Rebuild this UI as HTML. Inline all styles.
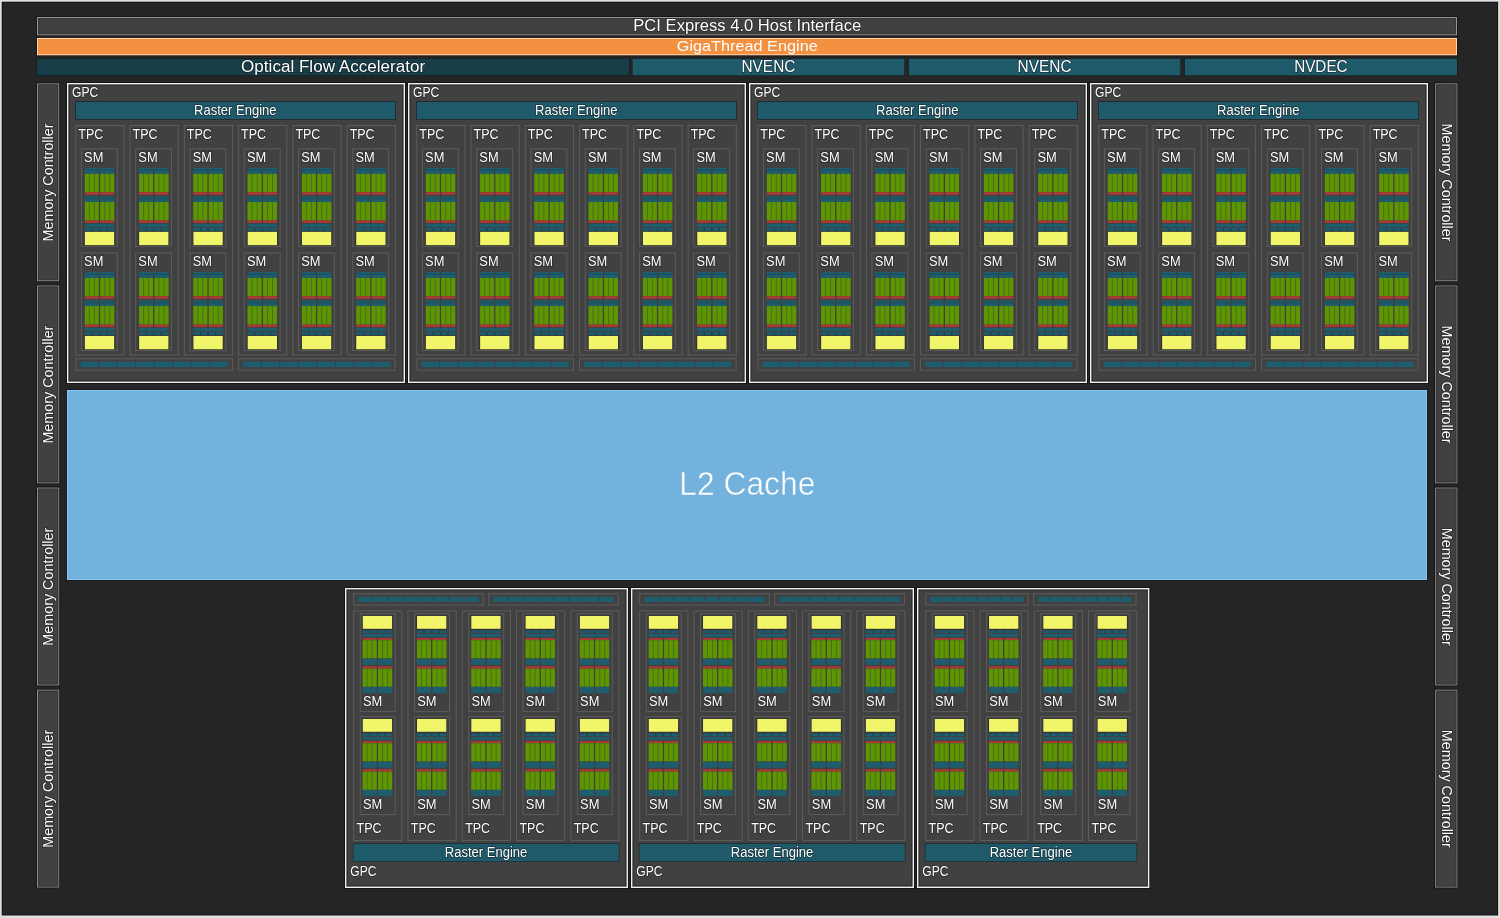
<!DOCTYPE html>
<html><head><meta charset="utf-8"><title>GPU Block Diagram</title>
<style>
html,body{margin:0;padding:0;background:#252525;width:1500px;height:918px;overflow:hidden}
svg{display:block;will-change:transform}
text{font-family:"Liberation Sans",sans-serif;fill:#ffffff;stroke:rgba(12,12,12,0.5);stroke-width:1.4px;paint-order:stroke}
</style></head><body>
<svg width="1500" height="918" viewBox="0 0 1500 918">
<defs><g id="smt"><rect x="0" y="19.6" width="13.95" height="6" fill="#1e5d6e"/><rect x="15.4" y="19.6" width="13.95" height="6" fill="#1e5d6e"/><rect x="0" y="21.3" width="13.95" height="0.7" fill="#1b4752"/><rect x="15.4" y="21.3" width="13.95" height="0.7" fill="#1b4752"/><rect x="0" y="25.6" width="13.95" height="18.2" fill="#4d6e1c"/><rect x="0" y="25.6" width="3.98" height="18.2" fill="#5d9600"/><rect x="4.98" y="25.6" width="3.98" height="18.2" fill="#5d9600"/><rect x="9.97" y="25.6" width="3.98" height="18.2" fill="#5d9600"/><rect x="15.4" y="25.6" width="13.95" height="18.2" fill="#4d6e1c"/><rect x="15.4" y="25.6" width="3.98" height="18.2" fill="#5d9600"/><rect x="20.38" y="25.6" width="3.98" height="18.2" fill="#5d9600"/><rect x="25.37" y="25.6" width="3.98" height="18.2" fill="#5d9600"/><rect x="0" y="43.8" width="13.95" height="2.7" fill="#a83a36"/><rect x="15.4" y="43.8" width="13.95" height="2.7" fill="#a83a36"/><rect x="0" y="48" width="13.95" height="5.7" fill="#1e5d6e"/><rect x="15.4" y="48" width="13.95" height="5.7" fill="#1e5d6e"/><rect x="0" y="50.1" width="13.95" height="0.7" fill="#1b4752"/><rect x="15.4" y="50.1" width="13.95" height="0.7" fill="#1b4752"/><rect x="0" y="53.7" width="13.95" height="18.4" fill="#4d6e1c"/><rect x="0" y="53.7" width="3.98" height="18.4" fill="#5d9600"/><rect x="4.98" y="53.7" width="3.98" height="18.4" fill="#5d9600"/><rect x="9.97" y="53.7" width="3.98" height="18.4" fill="#5d9600"/><rect x="15.4" y="53.7" width="13.95" height="18.4" fill="#4d6e1c"/><rect x="15.4" y="53.7" width="3.98" height="18.4" fill="#5d9600"/><rect x="20.38" y="53.7" width="3.98" height="18.4" fill="#5d9600"/><rect x="25.37" y="53.7" width="3.98" height="18.4" fill="#5d9600"/><rect x="0" y="72.1" width="13.95" height="2.6" fill="#a83a36"/><rect x="15.4" y="72.1" width="13.95" height="2.6" fill="#a83a36"/><rect x="0" y="75.6" width="29.35" height="3.1" fill="#1e5d6e"/><rect x="0" y="79.6" width="29.35" height="2.9" fill="#1a3d48"/><rect x="0" y="79.6" width="6.59" height="2.9" fill="#1e5d6e"/><rect x="7.59" y="79.6" width="6.59" height="2.9" fill="#1e5d6e"/><rect x="15.18" y="79.6" width="6.59" height="2.9" fill="#1e5d6e"/><rect x="22.76" y="79.6" width="6.59" height="2.9" fill="#1e5d6e"/><rect x="-0.5" y="83" width="30.35" height="14.4" fill="#1c1c28"/><rect x="0" y="83.5" width="29.35" height="13.4" fill="#f0f56a"/></g><g id="smb"><rect x="-0.5" y="2.2" width="30.35" height="13.9" fill="#1c1c28"/><rect x="0" y="2.7" width="29.35" height="12.9" fill="#f0f56a"/><rect x="0" y="17.3" width="29.35" height="2.5" fill="#1a3d48"/><rect x="0" y="17.3" width="6.59" height="2.5" fill="#1e5d6e"/><rect x="7.59" y="17.3" width="6.59" height="2.5" fill="#1e5d6e"/><rect x="15.18" y="17.3" width="6.59" height="2.5" fill="#1e5d6e"/><rect x="22.76" y="17.3" width="6.59" height="2.5" fill="#1e5d6e"/><rect x="0" y="20.8" width="29.35" height="3.0" fill="#1e5d6e"/><rect x="0" y="24.8" width="13.95" height="2.3" fill="#a83a36"/><rect x="15.4" y="24.8" width="13.95" height="2.3" fill="#a83a36"/><rect x="0" y="27.1" width="13.95" height="17.9" fill="#4d6e1c"/><rect x="0" y="27.1" width="3.98" height="17.9" fill="#5d9600"/><rect x="4.98" y="27.1" width="3.98" height="17.9" fill="#5d9600"/><rect x="9.97" y="27.1" width="3.98" height="17.9" fill="#5d9600"/><rect x="15.4" y="27.1" width="13.95" height="17.9" fill="#4d6e1c"/><rect x="15.4" y="27.1" width="3.98" height="17.9" fill="#5d9600"/><rect x="20.38" y="27.1" width="3.98" height="17.9" fill="#5d9600"/><rect x="25.37" y="27.1" width="3.98" height="17.9" fill="#5d9600"/><rect x="0" y="45.8" width="13.95" height="5.8" fill="#1e5d6e"/><rect x="15.4" y="45.8" width="13.95" height="5.8" fill="#1e5d6e"/><rect x="0" y="53" width="13.95" height="2.6" fill="#a83a36"/><rect x="15.4" y="53" width="13.95" height="2.6" fill="#a83a36"/><rect x="0" y="55.6" width="13.95" height="18" fill="#4d6e1c"/><rect x="0" y="55.6" width="3.98" height="18" fill="#5d9600"/><rect x="4.98" y="55.6" width="3.98" height="18" fill="#5d9600"/><rect x="9.97" y="55.6" width="3.98" height="18" fill="#5d9600"/><rect x="15.4" y="55.6" width="13.95" height="18" fill="#4d6e1c"/><rect x="15.4" y="55.6" width="3.98" height="18" fill="#5d9600"/><rect x="20.38" y="55.6" width="3.98" height="18" fill="#5d9600"/><rect x="25.37" y="55.6" width="3.98" height="18" fill="#5d9600"/><rect x="0" y="73.6" width="13.95" height="6.2" fill="#1e5d6e"/><rect x="15.4" y="73.6" width="13.95" height="6.2" fill="#1e5d6e"/></g></defs>
<rect x="0" y="0" width="1500" height="918" fill="#dfe1e3"/>
<rect x="1.7" y="1.7" width="1496.4" height="913.8" fill="#121212"/>
<rect x="2.7" y="2.7" width="1494.5" height="911.9" fill="#252525"/>
<rect x="36.5" y="16.5" width="1421" height="19.3" fill="none" stroke="#161616" stroke-width="1"/>
<rect x="37.55" y="17.55" width="1418.9" height="17.2" fill="#414141" stroke="#969696" stroke-width="1.1"/>
<rect x="38.6" y="18.6" width="1416.8" height="15.1" fill="none" stroke="#363636" stroke-width="1"/>
<text x="747.25" y="30.8" font-size="16.5" text-anchor="middle" textLength="228" lengthAdjust="spacingAndGlyphs">PCI Express 4.0 Host Interface</text>
<rect x="36.5" y="37.4" width="1421" height="18.4" fill="none" stroke="#161616" stroke-width="1"/>
<rect x="37" y="37.9" width="1420" height="17.4" fill="#ffd9b0"/>
<rect x="38" y="38.9" width="1418" height="15.4" fill="#f39140"/>
<text x="747.25" y="51.3" font-size="15" text-anchor="middle" textLength="141" lengthAdjust="spacingAndGlyphs" fill="#fff4ea" style="stroke:none">GigaThread Engine</text>
<rect x="36.4" y="58.3" width="593.4" height="17.6" fill="#141414"/>
<rect x="37" y="58.8" width="592.2" height="16.6" fill="#163d48"/>
<text x="333.1" y="72" font-size="16" text-anchor="middle" textLength="184" lengthAdjust="spacingAndGlyphs">Optical Flow Accelerator</text>
<rect x="631.9" y="58.3" width="273.1" height="17.6" fill="#141414"/>
<rect x="632.5" y="58.8" width="271.9" height="16.6" fill="#1f5a6a"/>
<text x="768.45" y="72" font-size="16" text-anchor="middle" textLength="54" lengthAdjust="spacingAndGlyphs">NVENC</text>
<rect x="908.1" y="58.3" width="273" height="17.6" fill="#141414"/>
<rect x="908.7" y="58.8" width="271.8" height="16.6" fill="#1f5a6a"/>
<text x="1044.6" y="72" font-size="16" text-anchor="middle" textLength="54" lengthAdjust="spacingAndGlyphs">NVENC</text>
<rect x="1184.2" y="58.3" width="273.4" height="17.6" fill="#141414"/>
<rect x="1184.8" y="58.8" width="272.2" height="16.6" fill="#1f5a6a"/>
<text x="1320.9" y="72" font-size="16" text-anchor="middle" textLength="53.5" lengthAdjust="spacingAndGlyphs">NVDEC</text>
<rect x="36.4" y="82.9" width="23.2" height="198.8" fill="none" stroke="#161616" stroke-width="1"/>
<rect x="37.5" y="83.9" width="21.2" height="196.8" fill="#414141" stroke="#8e8e8e" stroke-width="1"/>
<rect x="38.5" y="84.9" width="19.2" height="194.8" fill="none" stroke="#363636" stroke-width="1"/>
<text transform="translate(52.9 182.5) rotate(-90)" x="0" y="0" font-size="14.5" text-anchor="middle" textLength="118" lengthAdjust="spacingAndGlyphs">Memory Controller</text>
<rect x="1434.6" y="82.9" width="23.2" height="198.8" fill="none" stroke="#161616" stroke-width="1"/>
<rect x="1435.7" y="83.9" width="21.2" height="196.8" fill="#414141" stroke="#8e8e8e" stroke-width="1"/>
<rect x="1436.7" y="84.9" width="19.2" height="194.8" fill="none" stroke="#363636" stroke-width="1"/>
<text transform="translate(1442.1 182.5) rotate(90)" x="0" y="0" font-size="14.5" text-anchor="middle" textLength="118" lengthAdjust="spacingAndGlyphs">Memory Controller</text>
<rect x="36.4" y="285" width="23.2" height="198.8" fill="none" stroke="#161616" stroke-width="1"/>
<rect x="37.5" y="286" width="21.2" height="196.8" fill="#414141" stroke="#8e8e8e" stroke-width="1"/>
<rect x="38.5" y="287" width="19.2" height="194.8" fill="none" stroke="#363636" stroke-width="1"/>
<text transform="translate(52.9 384.6) rotate(-90)" x="0" y="0" font-size="14.5" text-anchor="middle" textLength="118" lengthAdjust="spacingAndGlyphs">Memory Controller</text>
<rect x="1434.6" y="285" width="23.2" height="198.8" fill="none" stroke="#161616" stroke-width="1"/>
<rect x="1435.7" y="286" width="21.2" height="196.8" fill="#414141" stroke="#8e8e8e" stroke-width="1"/>
<rect x="1436.7" y="287" width="19.2" height="194.8" fill="none" stroke="#363636" stroke-width="1"/>
<text transform="translate(1442.1 384.6) rotate(90)" x="0" y="0" font-size="14.5" text-anchor="middle" textLength="118" lengthAdjust="spacingAndGlyphs">Memory Controller</text>
<rect x="36.4" y="487.1" width="23.2" height="198.8" fill="none" stroke="#161616" stroke-width="1"/>
<rect x="37.5" y="488.1" width="21.2" height="196.8" fill="#414141" stroke="#8e8e8e" stroke-width="1"/>
<rect x="38.5" y="489.1" width="19.2" height="194.8" fill="none" stroke="#363636" stroke-width="1"/>
<text transform="translate(52.9 586.7) rotate(-90)" x="0" y="0" font-size="14.5" text-anchor="middle" textLength="118" lengthAdjust="spacingAndGlyphs">Memory Controller</text>
<rect x="1434.6" y="487.1" width="23.2" height="198.8" fill="none" stroke="#161616" stroke-width="1"/>
<rect x="1435.7" y="488.1" width="21.2" height="196.8" fill="#414141" stroke="#8e8e8e" stroke-width="1"/>
<rect x="1436.7" y="489.1" width="19.2" height="194.8" fill="none" stroke="#363636" stroke-width="1"/>
<text transform="translate(1442.1 586.7) rotate(90)" x="0" y="0" font-size="14.5" text-anchor="middle" textLength="118" lengthAdjust="spacingAndGlyphs">Memory Controller</text>
<rect x="36.4" y="689.2" width="23.2" height="198.8" fill="none" stroke="#161616" stroke-width="1"/>
<rect x="37.5" y="690.2" width="21.2" height="196.8" fill="#414141" stroke="#8e8e8e" stroke-width="1"/>
<rect x="38.5" y="691.2" width="19.2" height="194.8" fill="none" stroke="#363636" stroke-width="1"/>
<text transform="translate(52.9 788.8) rotate(-90)" x="0" y="0" font-size="14.5" text-anchor="middle" textLength="118" lengthAdjust="spacingAndGlyphs">Memory Controller</text>
<rect x="1434.6" y="689.2" width="23.2" height="198.8" fill="none" stroke="#161616" stroke-width="1"/>
<rect x="1435.7" y="690.2" width="21.2" height="196.8" fill="#414141" stroke="#8e8e8e" stroke-width="1"/>
<rect x="1436.7" y="691.2" width="19.2" height="194.8" fill="none" stroke="#363636" stroke-width="1"/>
<text transform="translate(1442.1 788.8) rotate(90)" x="0" y="0" font-size="14.5" text-anchor="middle" textLength="118" lengthAdjust="spacingAndGlyphs">Memory Controller</text>
<rect x="66.5" y="82.5" width="339" height="301" fill="none" stroke="#141414" stroke-width="1"/>
<rect x="67" y="83" width="338" height="300" fill="#f0f0f0"/>
<rect x="68.4" y="84.4" width="335.2" height="297.2" fill="#2a2a2a"/>
<rect x="69.6" y="85.6" width="332.8" height="294.8" fill="#414141"/>
<text x="72" y="97" font-size="14.5" textLength="26.3" lengthAdjust="spacingAndGlyphs">GPC</text>
<rect x="75.1" y="101.3" width="320.8" height="18.3" fill="#1c1c1c"/>
<rect x="75.7" y="101.9" width="319.6" height="17.2" fill="#1f5a6a"/>
<text x="235.25" y="114.8" font-size="14" text-anchor="middle" textLength="82.5" lengthAdjust="spacingAndGlyphs">Raster Engine</text>
<rect x="75.8" y="125.5" width="48.2" height="229.5" fill="#414141" stroke="#5c5c5c" stroke-width="1"/>
<text x="78.3" y="139" font-size="14.5" textLength="25" lengthAdjust="spacingAndGlyphs">TPC</text>
<rect x="81.4" y="148.8" width="35.9" height="97.5" fill="#414141" stroke="#5c5c5c" stroke-width="1"/>
<text x="84.1" y="162.3" font-size="14.5" textLength="19.3" lengthAdjust="spacingAndGlyphs">SM</text>
<use href="#smt" x="84.85" y="148.3"/>
<rect x="81.4" y="252.9" width="35.9" height="97.5" fill="#414141" stroke="#5c5c5c" stroke-width="1"/>
<text x="84.1" y="266.4" font-size="14.5" textLength="19.3" lengthAdjust="spacingAndGlyphs">SM</text>
<use href="#smt" x="84.85" y="252.4"/>
<rect x="130.07" y="125.5" width="48.2" height="229.5" fill="#414141" stroke="#5c5c5c" stroke-width="1"/>
<text x="132.57" y="139" font-size="14.5" textLength="25" lengthAdjust="spacingAndGlyphs">TPC</text>
<rect x="135.67" y="148.8" width="35.9" height="97.5" fill="#414141" stroke="#5c5c5c" stroke-width="1"/>
<text x="138.37" y="162.3" font-size="14.5" textLength="19.3" lengthAdjust="spacingAndGlyphs">SM</text>
<use href="#smt" x="139.12" y="148.3"/>
<rect x="135.67" y="252.9" width="35.9" height="97.5" fill="#414141" stroke="#5c5c5c" stroke-width="1"/>
<text x="138.37" y="266.4" font-size="14.5" textLength="19.3" lengthAdjust="spacingAndGlyphs">SM</text>
<use href="#smt" x="139.12" y="252.4"/>
<rect x="184.34" y="125.5" width="48.2" height="229.5" fill="#414141" stroke="#5c5c5c" stroke-width="1"/>
<text x="186.84" y="139" font-size="14.5" textLength="25" lengthAdjust="spacingAndGlyphs">TPC</text>
<rect x="189.94" y="148.8" width="35.9" height="97.5" fill="#414141" stroke="#5c5c5c" stroke-width="1"/>
<text x="192.64" y="162.3" font-size="14.5" textLength="19.3" lengthAdjust="spacingAndGlyphs">SM</text>
<use href="#smt" x="193.39" y="148.3"/>
<rect x="189.94" y="252.9" width="35.9" height="97.5" fill="#414141" stroke="#5c5c5c" stroke-width="1"/>
<text x="192.64" y="266.4" font-size="14.5" textLength="19.3" lengthAdjust="spacingAndGlyphs">SM</text>
<use href="#smt" x="193.39" y="252.4"/>
<rect x="238.61" y="125.5" width="48.2" height="229.5" fill="#414141" stroke="#5c5c5c" stroke-width="1"/>
<text x="241.11" y="139" font-size="14.5" textLength="25" lengthAdjust="spacingAndGlyphs">TPC</text>
<rect x="244.21" y="148.8" width="35.9" height="97.5" fill="#414141" stroke="#5c5c5c" stroke-width="1"/>
<text x="246.91" y="162.3" font-size="14.5" textLength="19.3" lengthAdjust="spacingAndGlyphs">SM</text>
<use href="#smt" x="247.66" y="148.3"/>
<rect x="244.21" y="252.9" width="35.9" height="97.5" fill="#414141" stroke="#5c5c5c" stroke-width="1"/>
<text x="246.91" y="266.4" font-size="14.5" textLength="19.3" lengthAdjust="spacingAndGlyphs">SM</text>
<use href="#smt" x="247.66" y="252.4"/>
<rect x="292.88" y="125.5" width="48.2" height="229.5" fill="#414141" stroke="#5c5c5c" stroke-width="1"/>
<text x="295.38" y="139" font-size="14.5" textLength="25" lengthAdjust="spacingAndGlyphs">TPC</text>
<rect x="298.48" y="148.8" width="35.9" height="97.5" fill="#414141" stroke="#5c5c5c" stroke-width="1"/>
<text x="301.18" y="162.3" font-size="14.5" textLength="19.3" lengthAdjust="spacingAndGlyphs">SM</text>
<use href="#smt" x="301.93" y="148.3"/>
<rect x="298.48" y="252.9" width="35.9" height="97.5" fill="#414141" stroke="#5c5c5c" stroke-width="1"/>
<text x="301.18" y="266.4" font-size="14.5" textLength="19.3" lengthAdjust="spacingAndGlyphs">SM</text>
<use href="#smt" x="301.93" y="252.4"/>
<rect x="347.15" y="125.5" width="48.2" height="229.5" fill="#414141" stroke="#5c5c5c" stroke-width="1"/>
<text x="349.65" y="139" font-size="14.5" textLength="25" lengthAdjust="spacingAndGlyphs">TPC</text>
<rect x="352.75" y="148.8" width="35.9" height="97.5" fill="#414141" stroke="#5c5c5c" stroke-width="1"/>
<text x="355.45" y="162.3" font-size="14.5" textLength="19.3" lengthAdjust="spacingAndGlyphs">SM</text>
<use href="#smt" x="356.2" y="148.3"/>
<rect x="352.75" y="252.9" width="35.9" height="97.5" fill="#414141" stroke="#5c5c5c" stroke-width="1"/>
<text x="355.45" y="266.4" font-size="14.5" textLength="19.3" lengthAdjust="spacingAndGlyphs">SM</text>
<use href="#smt" x="356.2" y="252.4"/>
<rect x="75.9" y="358.8" width="156.55" height="11.4" fill="#414141" stroke="#5c5c5c" stroke-width="1"/>
<rect x="80.5" y="361.7" width="147.35" height="5.4" fill="#374246"/>
<rect x="80.5" y="361.7" width="17.54" height="5.4" fill="#1e5d6e"/>
<rect x="99.04" y="361.7" width="17.54" height="5.4" fill="#1e5d6e"/>
<rect x="117.59" y="361.7" width="17.54" height="5.4" fill="#1e5d6e"/>
<rect x="136.13" y="361.7" width="17.54" height="5.4" fill="#1e5d6e"/>
<rect x="154.68" y="361.7" width="17.54" height="5.4" fill="#1e5d6e"/>
<rect x="173.22" y="361.7" width="17.54" height="5.4" fill="#1e5d6e"/>
<rect x="191.76" y="361.7" width="17.54" height="5.4" fill="#1e5d6e"/>
<rect x="210.31" y="361.7" width="17.54" height="5.4" fill="#1e5d6e"/>
<rect x="238.55" y="358.8" width="156.55" height="11.4" fill="#414141" stroke="#5c5c5c" stroke-width="1"/>
<rect x="243.15" y="361.7" width="147.35" height="5.4" fill="#374246"/>
<rect x="243.15" y="361.7" width="17.54" height="5.4" fill="#1e5d6e"/>
<rect x="261.69" y="361.7" width="17.54" height="5.4" fill="#1e5d6e"/>
<rect x="280.24" y="361.7" width="17.54" height="5.4" fill="#1e5d6e"/>
<rect x="298.78" y="361.7" width="17.54" height="5.4" fill="#1e5d6e"/>
<rect x="317.32" y="361.7" width="17.54" height="5.4" fill="#1e5d6e"/>
<rect x="335.87" y="361.7" width="17.54" height="5.4" fill="#1e5d6e"/>
<rect x="354.41" y="361.7" width="17.54" height="5.4" fill="#1e5d6e"/>
<rect x="372.96" y="361.7" width="17.54" height="5.4" fill="#1e5d6e"/>
<rect x="407.5" y="82.5" width="339" height="301" fill="none" stroke="#141414" stroke-width="1"/>
<rect x="408" y="83" width="338" height="300" fill="#f0f0f0"/>
<rect x="409.4" y="84.4" width="335.2" height="297.2" fill="#2a2a2a"/>
<rect x="410.6" y="85.6" width="332.8" height="294.8" fill="#414141"/>
<text x="413" y="97" font-size="14.5" textLength="26.3" lengthAdjust="spacingAndGlyphs">GPC</text>
<rect x="416.1" y="101.3" width="320.8" height="18.3" fill="#1c1c1c"/>
<rect x="416.7" y="101.9" width="319.6" height="17.2" fill="#1f5a6a"/>
<text x="576.25" y="114.8" font-size="14" text-anchor="middle" textLength="82.5" lengthAdjust="spacingAndGlyphs">Raster Engine</text>
<rect x="416.8" y="125.5" width="48.2" height="229.5" fill="#414141" stroke="#5c5c5c" stroke-width="1"/>
<text x="419.3" y="139" font-size="14.5" textLength="25" lengthAdjust="spacingAndGlyphs">TPC</text>
<rect x="422.4" y="148.8" width="35.9" height="97.5" fill="#414141" stroke="#5c5c5c" stroke-width="1"/>
<text x="425.1" y="162.3" font-size="14.5" textLength="19.3" lengthAdjust="spacingAndGlyphs">SM</text>
<use href="#smt" x="425.85" y="148.3"/>
<rect x="422.4" y="252.9" width="35.9" height="97.5" fill="#414141" stroke="#5c5c5c" stroke-width="1"/>
<text x="425.1" y="266.4" font-size="14.5" textLength="19.3" lengthAdjust="spacingAndGlyphs">SM</text>
<use href="#smt" x="425.85" y="252.4"/>
<rect x="471.07" y="125.5" width="48.2" height="229.5" fill="#414141" stroke="#5c5c5c" stroke-width="1"/>
<text x="473.57" y="139" font-size="14.5" textLength="25" lengthAdjust="spacingAndGlyphs">TPC</text>
<rect x="476.67" y="148.8" width="35.9" height="97.5" fill="#414141" stroke="#5c5c5c" stroke-width="1"/>
<text x="479.37" y="162.3" font-size="14.5" textLength="19.3" lengthAdjust="spacingAndGlyphs">SM</text>
<use href="#smt" x="480.12" y="148.3"/>
<rect x="476.67" y="252.9" width="35.9" height="97.5" fill="#414141" stroke="#5c5c5c" stroke-width="1"/>
<text x="479.37" y="266.4" font-size="14.5" textLength="19.3" lengthAdjust="spacingAndGlyphs">SM</text>
<use href="#smt" x="480.12" y="252.4"/>
<rect x="525.34" y="125.5" width="48.2" height="229.5" fill="#414141" stroke="#5c5c5c" stroke-width="1"/>
<text x="527.84" y="139" font-size="14.5" textLength="25" lengthAdjust="spacingAndGlyphs">TPC</text>
<rect x="530.94" y="148.8" width="35.9" height="97.5" fill="#414141" stroke="#5c5c5c" stroke-width="1"/>
<text x="533.64" y="162.3" font-size="14.5" textLength="19.3" lengthAdjust="spacingAndGlyphs">SM</text>
<use href="#smt" x="534.39" y="148.3"/>
<rect x="530.94" y="252.9" width="35.9" height="97.5" fill="#414141" stroke="#5c5c5c" stroke-width="1"/>
<text x="533.64" y="266.4" font-size="14.5" textLength="19.3" lengthAdjust="spacingAndGlyphs">SM</text>
<use href="#smt" x="534.39" y="252.4"/>
<rect x="579.61" y="125.5" width="48.2" height="229.5" fill="#414141" stroke="#5c5c5c" stroke-width="1"/>
<text x="582.11" y="139" font-size="14.5" textLength="25" lengthAdjust="spacingAndGlyphs">TPC</text>
<rect x="585.21" y="148.8" width="35.9" height="97.5" fill="#414141" stroke="#5c5c5c" stroke-width="1"/>
<text x="587.91" y="162.3" font-size="14.5" textLength="19.3" lengthAdjust="spacingAndGlyphs">SM</text>
<use href="#smt" x="588.66" y="148.3"/>
<rect x="585.21" y="252.9" width="35.9" height="97.5" fill="#414141" stroke="#5c5c5c" stroke-width="1"/>
<text x="587.91" y="266.4" font-size="14.5" textLength="19.3" lengthAdjust="spacingAndGlyphs">SM</text>
<use href="#smt" x="588.66" y="252.4"/>
<rect x="633.88" y="125.5" width="48.2" height="229.5" fill="#414141" stroke="#5c5c5c" stroke-width="1"/>
<text x="636.38" y="139" font-size="14.5" textLength="25" lengthAdjust="spacingAndGlyphs">TPC</text>
<rect x="639.48" y="148.8" width="35.9" height="97.5" fill="#414141" stroke="#5c5c5c" stroke-width="1"/>
<text x="642.18" y="162.3" font-size="14.5" textLength="19.3" lengthAdjust="spacingAndGlyphs">SM</text>
<use href="#smt" x="642.93" y="148.3"/>
<rect x="639.48" y="252.9" width="35.9" height="97.5" fill="#414141" stroke="#5c5c5c" stroke-width="1"/>
<text x="642.18" y="266.4" font-size="14.5" textLength="19.3" lengthAdjust="spacingAndGlyphs">SM</text>
<use href="#smt" x="642.93" y="252.4"/>
<rect x="688.15" y="125.5" width="48.2" height="229.5" fill="#414141" stroke="#5c5c5c" stroke-width="1"/>
<text x="690.65" y="139" font-size="14.5" textLength="25" lengthAdjust="spacingAndGlyphs">TPC</text>
<rect x="693.75" y="148.8" width="35.9" height="97.5" fill="#414141" stroke="#5c5c5c" stroke-width="1"/>
<text x="696.45" y="162.3" font-size="14.5" textLength="19.3" lengthAdjust="spacingAndGlyphs">SM</text>
<use href="#smt" x="697.2" y="148.3"/>
<rect x="693.75" y="252.9" width="35.9" height="97.5" fill="#414141" stroke="#5c5c5c" stroke-width="1"/>
<text x="696.45" y="266.4" font-size="14.5" textLength="19.3" lengthAdjust="spacingAndGlyphs">SM</text>
<use href="#smt" x="697.2" y="252.4"/>
<rect x="416.9" y="358.8" width="156.55" height="11.4" fill="#414141" stroke="#5c5c5c" stroke-width="1"/>
<rect x="421.5" y="361.7" width="147.35" height="5.4" fill="#374246"/>
<rect x="421.5" y="361.7" width="17.54" height="5.4" fill="#1e5d6e"/>
<rect x="440.04" y="361.7" width="17.54" height="5.4" fill="#1e5d6e"/>
<rect x="458.59" y="361.7" width="17.54" height="5.4" fill="#1e5d6e"/>
<rect x="477.13" y="361.7" width="17.54" height="5.4" fill="#1e5d6e"/>
<rect x="495.68" y="361.7" width="17.54" height="5.4" fill="#1e5d6e"/>
<rect x="514.22" y="361.7" width="17.54" height="5.4" fill="#1e5d6e"/>
<rect x="532.76" y="361.7" width="17.54" height="5.4" fill="#1e5d6e"/>
<rect x="551.31" y="361.7" width="17.54" height="5.4" fill="#1e5d6e"/>
<rect x="579.55" y="358.8" width="156.55" height="11.4" fill="#414141" stroke="#5c5c5c" stroke-width="1"/>
<rect x="584.15" y="361.7" width="147.35" height="5.4" fill="#374246"/>
<rect x="584.15" y="361.7" width="17.54" height="5.4" fill="#1e5d6e"/>
<rect x="602.69" y="361.7" width="17.54" height="5.4" fill="#1e5d6e"/>
<rect x="621.24" y="361.7" width="17.54" height="5.4" fill="#1e5d6e"/>
<rect x="639.78" y="361.7" width="17.54" height="5.4" fill="#1e5d6e"/>
<rect x="658.32" y="361.7" width="17.54" height="5.4" fill="#1e5d6e"/>
<rect x="676.87" y="361.7" width="17.54" height="5.4" fill="#1e5d6e"/>
<rect x="695.41" y="361.7" width="17.54" height="5.4" fill="#1e5d6e"/>
<rect x="713.96" y="361.7" width="17.54" height="5.4" fill="#1e5d6e"/>
<rect x="748.5" y="82.5" width="339" height="301" fill="none" stroke="#141414" stroke-width="1"/>
<rect x="749" y="83" width="338" height="300" fill="#f0f0f0"/>
<rect x="750.4" y="84.4" width="335.2" height="297.2" fill="#2a2a2a"/>
<rect x="751.6" y="85.6" width="332.8" height="294.8" fill="#414141"/>
<text x="754" y="97" font-size="14.5" textLength="26.3" lengthAdjust="spacingAndGlyphs">GPC</text>
<rect x="757.1" y="101.3" width="320.8" height="18.3" fill="#1c1c1c"/>
<rect x="757.7" y="101.9" width="319.6" height="17.2" fill="#1f5a6a"/>
<text x="917.25" y="114.8" font-size="14" text-anchor="middle" textLength="82.5" lengthAdjust="spacingAndGlyphs">Raster Engine</text>
<rect x="757.8" y="125.5" width="48.2" height="229.5" fill="#414141" stroke="#5c5c5c" stroke-width="1"/>
<text x="760.3" y="139" font-size="14.5" textLength="25" lengthAdjust="spacingAndGlyphs">TPC</text>
<rect x="763.4" y="148.8" width="35.9" height="97.5" fill="#414141" stroke="#5c5c5c" stroke-width="1"/>
<text x="766.1" y="162.3" font-size="14.5" textLength="19.3" lengthAdjust="spacingAndGlyphs">SM</text>
<use href="#smt" x="766.85" y="148.3"/>
<rect x="763.4" y="252.9" width="35.9" height="97.5" fill="#414141" stroke="#5c5c5c" stroke-width="1"/>
<text x="766.1" y="266.4" font-size="14.5" textLength="19.3" lengthAdjust="spacingAndGlyphs">SM</text>
<use href="#smt" x="766.85" y="252.4"/>
<rect x="812.07" y="125.5" width="48.2" height="229.5" fill="#414141" stroke="#5c5c5c" stroke-width="1"/>
<text x="814.57" y="139" font-size="14.5" textLength="25" lengthAdjust="spacingAndGlyphs">TPC</text>
<rect x="817.67" y="148.8" width="35.9" height="97.5" fill="#414141" stroke="#5c5c5c" stroke-width="1"/>
<text x="820.37" y="162.3" font-size="14.5" textLength="19.3" lengthAdjust="spacingAndGlyphs">SM</text>
<use href="#smt" x="821.12" y="148.3"/>
<rect x="817.67" y="252.9" width="35.9" height="97.5" fill="#414141" stroke="#5c5c5c" stroke-width="1"/>
<text x="820.37" y="266.4" font-size="14.5" textLength="19.3" lengthAdjust="spacingAndGlyphs">SM</text>
<use href="#smt" x="821.12" y="252.4"/>
<rect x="866.34" y="125.5" width="48.2" height="229.5" fill="#414141" stroke="#5c5c5c" stroke-width="1"/>
<text x="868.84" y="139" font-size="14.5" textLength="25" lengthAdjust="spacingAndGlyphs">TPC</text>
<rect x="871.94" y="148.8" width="35.9" height="97.5" fill="#414141" stroke="#5c5c5c" stroke-width="1"/>
<text x="874.64" y="162.3" font-size="14.5" textLength="19.3" lengthAdjust="spacingAndGlyphs">SM</text>
<use href="#smt" x="875.39" y="148.3"/>
<rect x="871.94" y="252.9" width="35.9" height="97.5" fill="#414141" stroke="#5c5c5c" stroke-width="1"/>
<text x="874.64" y="266.4" font-size="14.5" textLength="19.3" lengthAdjust="spacingAndGlyphs">SM</text>
<use href="#smt" x="875.39" y="252.4"/>
<rect x="920.61" y="125.5" width="48.2" height="229.5" fill="#414141" stroke="#5c5c5c" stroke-width="1"/>
<text x="923.11" y="139" font-size="14.5" textLength="25" lengthAdjust="spacingAndGlyphs">TPC</text>
<rect x="926.21" y="148.8" width="35.9" height="97.5" fill="#414141" stroke="#5c5c5c" stroke-width="1"/>
<text x="928.91" y="162.3" font-size="14.5" textLength="19.3" lengthAdjust="spacingAndGlyphs">SM</text>
<use href="#smt" x="929.66" y="148.3"/>
<rect x="926.21" y="252.9" width="35.9" height="97.5" fill="#414141" stroke="#5c5c5c" stroke-width="1"/>
<text x="928.91" y="266.4" font-size="14.5" textLength="19.3" lengthAdjust="spacingAndGlyphs">SM</text>
<use href="#smt" x="929.66" y="252.4"/>
<rect x="974.88" y="125.5" width="48.2" height="229.5" fill="#414141" stroke="#5c5c5c" stroke-width="1"/>
<text x="977.38" y="139" font-size="14.5" textLength="25" lengthAdjust="spacingAndGlyphs">TPC</text>
<rect x="980.48" y="148.8" width="35.9" height="97.5" fill="#414141" stroke="#5c5c5c" stroke-width="1"/>
<text x="983.18" y="162.3" font-size="14.5" textLength="19.3" lengthAdjust="spacingAndGlyphs">SM</text>
<use href="#smt" x="983.93" y="148.3"/>
<rect x="980.48" y="252.9" width="35.9" height="97.5" fill="#414141" stroke="#5c5c5c" stroke-width="1"/>
<text x="983.18" y="266.4" font-size="14.5" textLength="19.3" lengthAdjust="spacingAndGlyphs">SM</text>
<use href="#smt" x="983.93" y="252.4"/>
<rect x="1029.15" y="125.5" width="48.2" height="229.5" fill="#414141" stroke="#5c5c5c" stroke-width="1"/>
<text x="1031.65" y="139" font-size="14.5" textLength="25" lengthAdjust="spacingAndGlyphs">TPC</text>
<rect x="1034.75" y="148.8" width="35.9" height="97.5" fill="#414141" stroke="#5c5c5c" stroke-width="1"/>
<text x="1037.45" y="162.3" font-size="14.5" textLength="19.3" lengthAdjust="spacingAndGlyphs">SM</text>
<use href="#smt" x="1038.2" y="148.3"/>
<rect x="1034.75" y="252.9" width="35.9" height="97.5" fill="#414141" stroke="#5c5c5c" stroke-width="1"/>
<text x="1037.45" y="266.4" font-size="14.5" textLength="19.3" lengthAdjust="spacingAndGlyphs">SM</text>
<use href="#smt" x="1038.2" y="252.4"/>
<rect x="757.9" y="358.8" width="156.55" height="11.4" fill="#414141" stroke="#5c5c5c" stroke-width="1"/>
<rect x="762.5" y="361.7" width="147.35" height="5.4" fill="#374246"/>
<rect x="762.5" y="361.7" width="17.54" height="5.4" fill="#1e5d6e"/>
<rect x="781.04" y="361.7" width="17.54" height="5.4" fill="#1e5d6e"/>
<rect x="799.59" y="361.7" width="17.54" height="5.4" fill="#1e5d6e"/>
<rect x="818.13" y="361.7" width="17.54" height="5.4" fill="#1e5d6e"/>
<rect x="836.67" y="361.7" width="17.54" height="5.4" fill="#1e5d6e"/>
<rect x="855.22" y="361.7" width="17.54" height="5.4" fill="#1e5d6e"/>
<rect x="873.76" y="361.7" width="17.54" height="5.4" fill="#1e5d6e"/>
<rect x="892.31" y="361.7" width="17.54" height="5.4" fill="#1e5d6e"/>
<rect x="920.55" y="358.8" width="156.55" height="11.4" fill="#414141" stroke="#5c5c5c" stroke-width="1"/>
<rect x="925.15" y="361.7" width="147.35" height="5.4" fill="#374246"/>
<rect x="925.15" y="361.7" width="17.54" height="5.4" fill="#1e5d6e"/>
<rect x="943.69" y="361.7" width="17.54" height="5.4" fill="#1e5d6e"/>
<rect x="962.24" y="361.7" width="17.54" height="5.4" fill="#1e5d6e"/>
<rect x="980.78" y="361.7" width="17.54" height="5.4" fill="#1e5d6e"/>
<rect x="999.32" y="361.7" width="17.54" height="5.4" fill="#1e5d6e"/>
<rect x="1017.87" y="361.7" width="17.54" height="5.4" fill="#1e5d6e"/>
<rect x="1036.41" y="361.7" width="17.54" height="5.4" fill="#1e5d6e"/>
<rect x="1054.96" y="361.7" width="17.54" height="5.4" fill="#1e5d6e"/>
<rect x="1089.5" y="82.5" width="339" height="301" fill="none" stroke="#141414" stroke-width="1"/>
<rect x="1090" y="83" width="338" height="300" fill="#f0f0f0"/>
<rect x="1091.4" y="84.4" width="335.2" height="297.2" fill="#2a2a2a"/>
<rect x="1092.6" y="85.6" width="332.8" height="294.8" fill="#414141"/>
<text x="1095" y="97" font-size="14.5" textLength="26.3" lengthAdjust="spacingAndGlyphs">GPC</text>
<rect x="1098.1" y="101.3" width="320.8" height="18.3" fill="#1c1c1c"/>
<rect x="1098.7" y="101.9" width="319.6" height="17.2" fill="#1f5a6a"/>
<text x="1258.25" y="114.8" font-size="14" text-anchor="middle" textLength="82.5" lengthAdjust="spacingAndGlyphs">Raster Engine</text>
<rect x="1098.8" y="125.5" width="48.2" height="229.5" fill="#414141" stroke="#5c5c5c" stroke-width="1"/>
<text x="1101.3" y="139" font-size="14.5" textLength="25" lengthAdjust="spacingAndGlyphs">TPC</text>
<rect x="1104.4" y="148.8" width="35.9" height="97.5" fill="#414141" stroke="#5c5c5c" stroke-width="1"/>
<text x="1107.1" y="162.3" font-size="14.5" textLength="19.3" lengthAdjust="spacingAndGlyphs">SM</text>
<use href="#smt" x="1107.85" y="148.3"/>
<rect x="1104.4" y="252.9" width="35.9" height="97.5" fill="#414141" stroke="#5c5c5c" stroke-width="1"/>
<text x="1107.1" y="266.4" font-size="14.5" textLength="19.3" lengthAdjust="spacingAndGlyphs">SM</text>
<use href="#smt" x="1107.85" y="252.4"/>
<rect x="1153.07" y="125.5" width="48.2" height="229.5" fill="#414141" stroke="#5c5c5c" stroke-width="1"/>
<text x="1155.57" y="139" font-size="14.5" textLength="25" lengthAdjust="spacingAndGlyphs">TPC</text>
<rect x="1158.67" y="148.8" width="35.9" height="97.5" fill="#414141" stroke="#5c5c5c" stroke-width="1"/>
<text x="1161.37" y="162.3" font-size="14.5" textLength="19.3" lengthAdjust="spacingAndGlyphs">SM</text>
<use href="#smt" x="1162.12" y="148.3"/>
<rect x="1158.67" y="252.9" width="35.9" height="97.5" fill="#414141" stroke="#5c5c5c" stroke-width="1"/>
<text x="1161.37" y="266.4" font-size="14.5" textLength="19.3" lengthAdjust="spacingAndGlyphs">SM</text>
<use href="#smt" x="1162.12" y="252.4"/>
<rect x="1207.34" y="125.5" width="48.2" height="229.5" fill="#414141" stroke="#5c5c5c" stroke-width="1"/>
<text x="1209.84" y="139" font-size="14.5" textLength="25" lengthAdjust="spacingAndGlyphs">TPC</text>
<rect x="1212.94" y="148.8" width="35.9" height="97.5" fill="#414141" stroke="#5c5c5c" stroke-width="1"/>
<text x="1215.64" y="162.3" font-size="14.5" textLength="19.3" lengthAdjust="spacingAndGlyphs">SM</text>
<use href="#smt" x="1216.39" y="148.3"/>
<rect x="1212.94" y="252.9" width="35.9" height="97.5" fill="#414141" stroke="#5c5c5c" stroke-width="1"/>
<text x="1215.64" y="266.4" font-size="14.5" textLength="19.3" lengthAdjust="spacingAndGlyphs">SM</text>
<use href="#smt" x="1216.39" y="252.4"/>
<rect x="1261.61" y="125.5" width="48.2" height="229.5" fill="#414141" stroke="#5c5c5c" stroke-width="1"/>
<text x="1264.11" y="139" font-size="14.5" textLength="25" lengthAdjust="spacingAndGlyphs">TPC</text>
<rect x="1267.21" y="148.8" width="35.9" height="97.5" fill="#414141" stroke="#5c5c5c" stroke-width="1"/>
<text x="1269.91" y="162.3" font-size="14.5" textLength="19.3" lengthAdjust="spacingAndGlyphs">SM</text>
<use href="#smt" x="1270.66" y="148.3"/>
<rect x="1267.21" y="252.9" width="35.9" height="97.5" fill="#414141" stroke="#5c5c5c" stroke-width="1"/>
<text x="1269.91" y="266.4" font-size="14.5" textLength="19.3" lengthAdjust="spacingAndGlyphs">SM</text>
<use href="#smt" x="1270.66" y="252.4"/>
<rect x="1315.88" y="125.5" width="48.2" height="229.5" fill="#414141" stroke="#5c5c5c" stroke-width="1"/>
<text x="1318.38" y="139" font-size="14.5" textLength="25" lengthAdjust="spacingAndGlyphs">TPC</text>
<rect x="1321.48" y="148.8" width="35.9" height="97.5" fill="#414141" stroke="#5c5c5c" stroke-width="1"/>
<text x="1324.18" y="162.3" font-size="14.5" textLength="19.3" lengthAdjust="spacingAndGlyphs">SM</text>
<use href="#smt" x="1324.93" y="148.3"/>
<rect x="1321.48" y="252.9" width="35.9" height="97.5" fill="#414141" stroke="#5c5c5c" stroke-width="1"/>
<text x="1324.18" y="266.4" font-size="14.5" textLength="19.3" lengthAdjust="spacingAndGlyphs">SM</text>
<use href="#smt" x="1324.93" y="252.4"/>
<rect x="1370.15" y="125.5" width="48.2" height="229.5" fill="#414141" stroke="#5c5c5c" stroke-width="1"/>
<text x="1372.65" y="139" font-size="14.5" textLength="25" lengthAdjust="spacingAndGlyphs">TPC</text>
<rect x="1375.75" y="148.8" width="35.9" height="97.5" fill="#414141" stroke="#5c5c5c" stroke-width="1"/>
<text x="1378.45" y="162.3" font-size="14.5" textLength="19.3" lengthAdjust="spacingAndGlyphs">SM</text>
<use href="#smt" x="1379.2" y="148.3"/>
<rect x="1375.75" y="252.9" width="35.9" height="97.5" fill="#414141" stroke="#5c5c5c" stroke-width="1"/>
<text x="1378.45" y="266.4" font-size="14.5" textLength="19.3" lengthAdjust="spacingAndGlyphs">SM</text>
<use href="#smt" x="1379.2" y="252.4"/>
<rect x="1098.9" y="358.8" width="156.55" height="11.4" fill="#414141" stroke="#5c5c5c" stroke-width="1"/>
<rect x="1103.5" y="361.7" width="147.35" height="5.4" fill="#374246"/>
<rect x="1103.5" y="361.7" width="17.54" height="5.4" fill="#1e5d6e"/>
<rect x="1122.04" y="361.7" width="17.54" height="5.4" fill="#1e5d6e"/>
<rect x="1140.59" y="361.7" width="17.54" height="5.4" fill="#1e5d6e"/>
<rect x="1159.13" y="361.7" width="17.54" height="5.4" fill="#1e5d6e"/>
<rect x="1177.67" y="361.7" width="17.54" height="5.4" fill="#1e5d6e"/>
<rect x="1196.22" y="361.7" width="17.54" height="5.4" fill="#1e5d6e"/>
<rect x="1214.76" y="361.7" width="17.54" height="5.4" fill="#1e5d6e"/>
<rect x="1233.31" y="361.7" width="17.54" height="5.4" fill="#1e5d6e"/>
<rect x="1261.55" y="358.8" width="156.55" height="11.4" fill="#414141" stroke="#5c5c5c" stroke-width="1"/>
<rect x="1266.15" y="361.7" width="147.35" height="5.4" fill="#374246"/>
<rect x="1266.15" y="361.7" width="17.54" height="5.4" fill="#1e5d6e"/>
<rect x="1284.69" y="361.7" width="17.54" height="5.4" fill="#1e5d6e"/>
<rect x="1303.24" y="361.7" width="17.54" height="5.4" fill="#1e5d6e"/>
<rect x="1321.78" y="361.7" width="17.54" height="5.4" fill="#1e5d6e"/>
<rect x="1340.32" y="361.7" width="17.54" height="5.4" fill="#1e5d6e"/>
<rect x="1358.87" y="361.7" width="17.54" height="5.4" fill="#1e5d6e"/>
<rect x="1377.41" y="361.7" width="17.54" height="5.4" fill="#1e5d6e"/>
<rect x="1395.96" y="361.7" width="17.54" height="5.4" fill="#1e5d6e"/>
<rect x="66.5" y="389.5" width="1361" height="191" fill="#141414"/>
<rect x="67" y="390" width="1360" height="190" fill="#86c6f2"/>
<rect x="68" y="391" width="1358" height="188" fill="#74b2de"/>
<text x="747.3" y="495.3" font-size="33.4" text-anchor="middle" textLength="136" lengthAdjust="spacingAndGlyphs" style="stroke:#74b2de;stroke-width:0.5px;paint-order:normal">L2 Cache</text>
<rect x="344.5" y="587.5" width="284" height="301" fill="none" stroke="#141414" stroke-width="1"/>
<rect x="345" y="588" width="283" height="300" fill="#f0f0f0"/>
<rect x="346.4" y="589.4" width="280.2" height="297.2" fill="#2a2a2a"/>
<rect x="347.6" y="590.6" width="277.8" height="294.8" fill="#414141"/>
<rect x="353.7" y="593.8" width="129.59" height="11.2" fill="#414141" stroke="#5c5c5c" stroke-width="1"/>
<rect x="358.3" y="596.8" width="120.39" height="5.2" fill="#374246"/>
<rect x="358.3" y="596.8" width="14.17" height="5.2" fill="#1e5d6e"/>
<rect x="373.47" y="596.8" width="14.17" height="5.2" fill="#1e5d6e"/>
<rect x="388.65" y="596.8" width="14.17" height="5.2" fill="#1e5d6e"/>
<rect x="403.82" y="596.8" width="14.17" height="5.2" fill="#1e5d6e"/>
<rect x="419" y="596.8" width="14.17" height="5.2" fill="#1e5d6e"/>
<rect x="434.17" y="596.8" width="14.17" height="5.2" fill="#1e5d6e"/>
<rect x="449.34" y="596.8" width="14.17" height="5.2" fill="#1e5d6e"/>
<rect x="464.52" y="596.8" width="14.17" height="5.2" fill="#1e5d6e"/>
<rect x="488.79" y="593.8" width="129.59" height="11.2" fill="#414141" stroke="#5c5c5c" stroke-width="1"/>
<rect x="493.39" y="596.8" width="120.39" height="5.2" fill="#374246"/>
<rect x="493.39" y="596.8" width="14.17" height="5.2" fill="#1e5d6e"/>
<rect x="508.56" y="596.8" width="14.17" height="5.2" fill="#1e5d6e"/>
<rect x="523.74" y="596.8" width="14.17" height="5.2" fill="#1e5d6e"/>
<rect x="538.91" y="596.8" width="14.17" height="5.2" fill="#1e5d6e"/>
<rect x="554.09" y="596.8" width="14.17" height="5.2" fill="#1e5d6e"/>
<rect x="569.26" y="596.8" width="14.17" height="5.2" fill="#1e5d6e"/>
<rect x="584.43" y="596.8" width="14.17" height="5.2" fill="#1e5d6e"/>
<rect x="599.61" y="596.8" width="14.17" height="5.2" fill="#1e5d6e"/>
<rect x="353.7" y="610.9" width="48.2" height="229.6" fill="#414141" stroke="#5c5c5c" stroke-width="1"/>
<text x="356.6" y="832.7" font-size="14.5" textLength="25" lengthAdjust="spacingAndGlyphs">TPC</text>
<rect x="360.2" y="613.7" width="35" height="97.9" fill="#414141" stroke="#5c5c5c" stroke-width="1"/>
<text x="363" y="706.4" font-size="14.5" textLength="19.3" lengthAdjust="spacingAndGlyphs">SM</text>
<use href="#smb" x="362.75" y="613.2"/>
<rect x="360.2" y="716.7" width="35" height="97.9" fill="#414141" stroke="#5c5c5c" stroke-width="1"/>
<text x="363" y="809.4" font-size="14.5" textLength="19.3" lengthAdjust="spacingAndGlyphs">SM</text>
<use href="#smb" x="362.75" y="716.2"/>
<rect x="407.97" y="610.9" width="48.2" height="229.6" fill="#414141" stroke="#5c5c5c" stroke-width="1"/>
<text x="410.87" y="832.7" font-size="14.5" textLength="25" lengthAdjust="spacingAndGlyphs">TPC</text>
<rect x="414.47" y="613.7" width="35" height="97.9" fill="#414141" stroke="#5c5c5c" stroke-width="1"/>
<text x="417.27" y="706.4" font-size="14.5" textLength="19.3" lengthAdjust="spacingAndGlyphs">SM</text>
<use href="#smb" x="417.02" y="613.2"/>
<rect x="414.47" y="716.7" width="35" height="97.9" fill="#414141" stroke="#5c5c5c" stroke-width="1"/>
<text x="417.27" y="809.4" font-size="14.5" textLength="19.3" lengthAdjust="spacingAndGlyphs">SM</text>
<use href="#smb" x="417.02" y="716.2"/>
<rect x="462.24" y="610.9" width="48.2" height="229.6" fill="#414141" stroke="#5c5c5c" stroke-width="1"/>
<text x="465.14" y="832.7" font-size="14.5" textLength="25" lengthAdjust="spacingAndGlyphs">TPC</text>
<rect x="468.74" y="613.7" width="35" height="97.9" fill="#414141" stroke="#5c5c5c" stroke-width="1"/>
<text x="471.54" y="706.4" font-size="14.5" textLength="19.3" lengthAdjust="spacingAndGlyphs">SM</text>
<use href="#smb" x="471.29" y="613.2"/>
<rect x="468.74" y="716.7" width="35" height="97.9" fill="#414141" stroke="#5c5c5c" stroke-width="1"/>
<text x="471.54" y="809.4" font-size="14.5" textLength="19.3" lengthAdjust="spacingAndGlyphs">SM</text>
<use href="#smb" x="471.29" y="716.2"/>
<rect x="516.51" y="610.9" width="48.2" height="229.6" fill="#414141" stroke="#5c5c5c" stroke-width="1"/>
<text x="519.41" y="832.7" font-size="14.5" textLength="25" lengthAdjust="spacingAndGlyphs">TPC</text>
<rect x="523.01" y="613.7" width="35" height="97.9" fill="#414141" stroke="#5c5c5c" stroke-width="1"/>
<text x="525.81" y="706.4" font-size="14.5" textLength="19.3" lengthAdjust="spacingAndGlyphs">SM</text>
<use href="#smb" x="525.56" y="613.2"/>
<rect x="523.01" y="716.7" width="35" height="97.9" fill="#414141" stroke="#5c5c5c" stroke-width="1"/>
<text x="525.81" y="809.4" font-size="14.5" textLength="19.3" lengthAdjust="spacingAndGlyphs">SM</text>
<use href="#smb" x="525.56" y="716.2"/>
<rect x="570.78" y="610.9" width="48.2" height="229.6" fill="#414141" stroke="#5c5c5c" stroke-width="1"/>
<text x="573.68" y="832.7" font-size="14.5" textLength="25" lengthAdjust="spacingAndGlyphs">TPC</text>
<rect x="577.28" y="613.7" width="35" height="97.9" fill="#414141" stroke="#5c5c5c" stroke-width="1"/>
<text x="580.08" y="706.4" font-size="14.5" textLength="19.3" lengthAdjust="spacingAndGlyphs">SM</text>
<use href="#smb" x="579.83" y="613.2"/>
<rect x="577.28" y="716.7" width="35" height="97.9" fill="#414141" stroke="#5c5c5c" stroke-width="1"/>
<text x="580.08" y="809.4" font-size="14.5" textLength="19.3" lengthAdjust="spacingAndGlyphs">SM</text>
<use href="#smb" x="579.83" y="716.2"/>
<rect x="352.9" y="843.2" width="266.48" height="18.7" fill="#1c1c1c"/>
<rect x="353.4" y="843.7" width="265.48" height="17.7" fill="#1f5a6a"/>
<text x="486.04" y="856.8" font-size="14" text-anchor="middle" textLength="82.5" lengthAdjust="spacingAndGlyphs">Raster Engine</text>
<text x="350.2" y="875.7" font-size="14.5" textLength="26.3" lengthAdjust="spacingAndGlyphs">GPC</text>
<rect x="630.5" y="587.5" width="284" height="301" fill="none" stroke="#141414" stroke-width="1"/>
<rect x="631" y="588" width="283" height="300" fill="#f0f0f0"/>
<rect x="632.4" y="589.4" width="280.2" height="297.2" fill="#2a2a2a"/>
<rect x="633.6" y="590.6" width="277.8" height="294.8" fill="#414141"/>
<rect x="639.7" y="593.8" width="129.59" height="11.2" fill="#414141" stroke="#5c5c5c" stroke-width="1"/>
<rect x="644.3" y="596.8" width="120.39" height="5.2" fill="#374246"/>
<rect x="644.3" y="596.8" width="14.17" height="5.2" fill="#1e5d6e"/>
<rect x="659.47" y="596.8" width="14.17" height="5.2" fill="#1e5d6e"/>
<rect x="674.65" y="596.8" width="14.17" height="5.2" fill="#1e5d6e"/>
<rect x="689.82" y="596.8" width="14.17" height="5.2" fill="#1e5d6e"/>
<rect x="705" y="596.8" width="14.17" height="5.2" fill="#1e5d6e"/>
<rect x="720.17" y="596.8" width="14.17" height="5.2" fill="#1e5d6e"/>
<rect x="735.34" y="596.8" width="14.17" height="5.2" fill="#1e5d6e"/>
<rect x="750.52" y="596.8" width="14.17" height="5.2" fill="#1e5d6e"/>
<rect x="774.79" y="593.8" width="129.59" height="11.2" fill="#414141" stroke="#5c5c5c" stroke-width="1"/>
<rect x="779.39" y="596.8" width="120.39" height="5.2" fill="#374246"/>
<rect x="779.39" y="596.8" width="14.17" height="5.2" fill="#1e5d6e"/>
<rect x="794.56" y="596.8" width="14.17" height="5.2" fill="#1e5d6e"/>
<rect x="809.74" y="596.8" width="14.17" height="5.2" fill="#1e5d6e"/>
<rect x="824.91" y="596.8" width="14.17" height="5.2" fill="#1e5d6e"/>
<rect x="840.09" y="596.8" width="14.17" height="5.2" fill="#1e5d6e"/>
<rect x="855.26" y="596.8" width="14.17" height="5.2" fill="#1e5d6e"/>
<rect x="870.43" y="596.8" width="14.17" height="5.2" fill="#1e5d6e"/>
<rect x="885.61" y="596.8" width="14.17" height="5.2" fill="#1e5d6e"/>
<rect x="639.7" y="610.9" width="48.2" height="229.6" fill="#414141" stroke="#5c5c5c" stroke-width="1"/>
<text x="642.6" y="832.7" font-size="14.5" textLength="25" lengthAdjust="spacingAndGlyphs">TPC</text>
<rect x="646.2" y="613.7" width="35" height="97.9" fill="#414141" stroke="#5c5c5c" stroke-width="1"/>
<text x="649" y="706.4" font-size="14.5" textLength="19.3" lengthAdjust="spacingAndGlyphs">SM</text>
<use href="#smb" x="648.75" y="613.2"/>
<rect x="646.2" y="716.7" width="35" height="97.9" fill="#414141" stroke="#5c5c5c" stroke-width="1"/>
<text x="649" y="809.4" font-size="14.5" textLength="19.3" lengthAdjust="spacingAndGlyphs">SM</text>
<use href="#smb" x="648.75" y="716.2"/>
<rect x="693.97" y="610.9" width="48.2" height="229.6" fill="#414141" stroke="#5c5c5c" stroke-width="1"/>
<text x="696.87" y="832.7" font-size="14.5" textLength="25" lengthAdjust="spacingAndGlyphs">TPC</text>
<rect x="700.47" y="613.7" width="35" height="97.9" fill="#414141" stroke="#5c5c5c" stroke-width="1"/>
<text x="703.27" y="706.4" font-size="14.5" textLength="19.3" lengthAdjust="spacingAndGlyphs">SM</text>
<use href="#smb" x="703.02" y="613.2"/>
<rect x="700.47" y="716.7" width="35" height="97.9" fill="#414141" stroke="#5c5c5c" stroke-width="1"/>
<text x="703.27" y="809.4" font-size="14.5" textLength="19.3" lengthAdjust="spacingAndGlyphs">SM</text>
<use href="#smb" x="703.02" y="716.2"/>
<rect x="748.24" y="610.9" width="48.2" height="229.6" fill="#414141" stroke="#5c5c5c" stroke-width="1"/>
<text x="751.14" y="832.7" font-size="14.5" textLength="25" lengthAdjust="spacingAndGlyphs">TPC</text>
<rect x="754.74" y="613.7" width="35" height="97.9" fill="#414141" stroke="#5c5c5c" stroke-width="1"/>
<text x="757.54" y="706.4" font-size="14.5" textLength="19.3" lengthAdjust="spacingAndGlyphs">SM</text>
<use href="#smb" x="757.29" y="613.2"/>
<rect x="754.74" y="716.7" width="35" height="97.9" fill="#414141" stroke="#5c5c5c" stroke-width="1"/>
<text x="757.54" y="809.4" font-size="14.5" textLength="19.3" lengthAdjust="spacingAndGlyphs">SM</text>
<use href="#smb" x="757.29" y="716.2"/>
<rect x="802.51" y="610.9" width="48.2" height="229.6" fill="#414141" stroke="#5c5c5c" stroke-width="1"/>
<text x="805.41" y="832.7" font-size="14.5" textLength="25" lengthAdjust="spacingAndGlyphs">TPC</text>
<rect x="809.01" y="613.7" width="35" height="97.9" fill="#414141" stroke="#5c5c5c" stroke-width="1"/>
<text x="811.81" y="706.4" font-size="14.5" textLength="19.3" lengthAdjust="spacingAndGlyphs">SM</text>
<use href="#smb" x="811.56" y="613.2"/>
<rect x="809.01" y="716.7" width="35" height="97.9" fill="#414141" stroke="#5c5c5c" stroke-width="1"/>
<text x="811.81" y="809.4" font-size="14.5" textLength="19.3" lengthAdjust="spacingAndGlyphs">SM</text>
<use href="#smb" x="811.56" y="716.2"/>
<rect x="856.78" y="610.9" width="48.2" height="229.6" fill="#414141" stroke="#5c5c5c" stroke-width="1"/>
<text x="859.68" y="832.7" font-size="14.5" textLength="25" lengthAdjust="spacingAndGlyphs">TPC</text>
<rect x="863.28" y="613.7" width="35" height="97.9" fill="#414141" stroke="#5c5c5c" stroke-width="1"/>
<text x="866.08" y="706.4" font-size="14.5" textLength="19.3" lengthAdjust="spacingAndGlyphs">SM</text>
<use href="#smb" x="865.83" y="613.2"/>
<rect x="863.28" y="716.7" width="35" height="97.9" fill="#414141" stroke="#5c5c5c" stroke-width="1"/>
<text x="866.08" y="809.4" font-size="14.5" textLength="19.3" lengthAdjust="spacingAndGlyphs">SM</text>
<use href="#smb" x="865.83" y="716.2"/>
<rect x="638.9" y="843.2" width="266.48" height="18.7" fill="#1c1c1c"/>
<rect x="639.4" y="843.7" width="265.48" height="17.7" fill="#1f5a6a"/>
<text x="772.04" y="856.8" font-size="14" text-anchor="middle" textLength="82.5" lengthAdjust="spacingAndGlyphs">Raster Engine</text>
<text x="636.2" y="875.7" font-size="14.5" textLength="26.3" lengthAdjust="spacingAndGlyphs">GPC</text>
<rect x="916.5" y="587.5" width="233.3" height="301" fill="none" stroke="#141414" stroke-width="1"/>
<rect x="917" y="588" width="232.3" height="300" fill="#f0f0f0"/>
<rect x="918.4" y="589.4" width="229.5" height="297.2" fill="#2a2a2a"/>
<rect x="919.6" y="590.6" width="227.1" height="294.8" fill="#414141"/>
<rect x="925.7" y="593.8" width="102.45" height="11.2" fill="#414141" stroke="#5c5c5c" stroke-width="1"/>
<rect x="930.3" y="596.8" width="93.25" height="5.2" fill="#374246"/>
<rect x="930.3" y="596.8" width="10.78" height="5.2" fill="#1e5d6e"/>
<rect x="942.08" y="596.8" width="10.78" height="5.2" fill="#1e5d6e"/>
<rect x="953.86" y="596.8" width="10.78" height="5.2" fill="#1e5d6e"/>
<rect x="965.65" y="596.8" width="10.78" height="5.2" fill="#1e5d6e"/>
<rect x="977.43" y="596.8" width="10.78" height="5.2" fill="#1e5d6e"/>
<rect x="989.21" y="596.8" width="10.78" height="5.2" fill="#1e5d6e"/>
<rect x="1000.99" y="596.8" width="10.78" height="5.2" fill="#1e5d6e"/>
<rect x="1012.77" y="596.8" width="10.78" height="5.2" fill="#1e5d6e"/>
<rect x="1033.65" y="593.8" width="102.45" height="11.2" fill="#414141" stroke="#5c5c5c" stroke-width="1"/>
<rect x="1038.25" y="596.8" width="93.25" height="5.2" fill="#374246"/>
<rect x="1038.25" y="596.8" width="10.78" height="5.2" fill="#1e5d6e"/>
<rect x="1050.04" y="596.8" width="10.78" height="5.2" fill="#1e5d6e"/>
<rect x="1061.82" y="596.8" width="10.78" height="5.2" fill="#1e5d6e"/>
<rect x="1073.6" y="596.8" width="10.78" height="5.2" fill="#1e5d6e"/>
<rect x="1085.38" y="596.8" width="10.78" height="5.2" fill="#1e5d6e"/>
<rect x="1097.16" y="596.8" width="10.78" height="5.2" fill="#1e5d6e"/>
<rect x="1108.95" y="596.8" width="10.78" height="5.2" fill="#1e5d6e"/>
<rect x="1120.73" y="596.8" width="10.78" height="5.2" fill="#1e5d6e"/>
<rect x="925.7" y="610.9" width="48.2" height="229.6" fill="#414141" stroke="#5c5c5c" stroke-width="1"/>
<text x="928.6" y="832.7" font-size="14.5" textLength="25" lengthAdjust="spacingAndGlyphs">TPC</text>
<rect x="932.2" y="613.7" width="35" height="97.9" fill="#414141" stroke="#5c5c5c" stroke-width="1"/>
<text x="935" y="706.4" font-size="14.5" textLength="19.3" lengthAdjust="spacingAndGlyphs">SM</text>
<use href="#smb" x="934.75" y="613.2"/>
<rect x="932.2" y="716.7" width="35" height="97.9" fill="#414141" stroke="#5c5c5c" stroke-width="1"/>
<text x="935" y="809.4" font-size="14.5" textLength="19.3" lengthAdjust="spacingAndGlyphs">SM</text>
<use href="#smb" x="934.75" y="716.2"/>
<rect x="979.97" y="610.9" width="48.2" height="229.6" fill="#414141" stroke="#5c5c5c" stroke-width="1"/>
<text x="982.87" y="832.7" font-size="14.5" textLength="25" lengthAdjust="spacingAndGlyphs">TPC</text>
<rect x="986.47" y="613.7" width="35" height="97.9" fill="#414141" stroke="#5c5c5c" stroke-width="1"/>
<text x="989.27" y="706.4" font-size="14.5" textLength="19.3" lengthAdjust="spacingAndGlyphs">SM</text>
<use href="#smb" x="989.02" y="613.2"/>
<rect x="986.47" y="716.7" width="35" height="97.9" fill="#414141" stroke="#5c5c5c" stroke-width="1"/>
<text x="989.27" y="809.4" font-size="14.5" textLength="19.3" lengthAdjust="spacingAndGlyphs">SM</text>
<use href="#smb" x="989.02" y="716.2"/>
<rect x="1034.24" y="610.9" width="48.2" height="229.6" fill="#414141" stroke="#5c5c5c" stroke-width="1"/>
<text x="1037.14" y="832.7" font-size="14.5" textLength="25" lengthAdjust="spacingAndGlyphs">TPC</text>
<rect x="1040.74" y="613.7" width="35" height="97.9" fill="#414141" stroke="#5c5c5c" stroke-width="1"/>
<text x="1043.54" y="706.4" font-size="14.5" textLength="19.3" lengthAdjust="spacingAndGlyphs">SM</text>
<use href="#smb" x="1043.29" y="613.2"/>
<rect x="1040.74" y="716.7" width="35" height="97.9" fill="#414141" stroke="#5c5c5c" stroke-width="1"/>
<text x="1043.54" y="809.4" font-size="14.5" textLength="19.3" lengthAdjust="spacingAndGlyphs">SM</text>
<use href="#smb" x="1043.29" y="716.2"/>
<rect x="1088.51" y="610.9" width="48.2" height="229.6" fill="#414141" stroke="#5c5c5c" stroke-width="1"/>
<text x="1091.41" y="832.7" font-size="14.5" textLength="25" lengthAdjust="spacingAndGlyphs">TPC</text>
<rect x="1095.01" y="613.7" width="35" height="97.9" fill="#414141" stroke="#5c5c5c" stroke-width="1"/>
<text x="1097.81" y="706.4" font-size="14.5" textLength="19.3" lengthAdjust="spacingAndGlyphs">SM</text>
<use href="#smb" x="1097.56" y="613.2"/>
<rect x="1095.01" y="716.7" width="35" height="97.9" fill="#414141" stroke="#5c5c5c" stroke-width="1"/>
<text x="1097.81" y="809.4" font-size="14.5" textLength="19.3" lengthAdjust="spacingAndGlyphs">SM</text>
<use href="#smb" x="1097.56" y="716.2"/>
<rect x="924.9" y="843.2" width="212.21" height="18.7" fill="#1c1c1c"/>
<rect x="925.4" y="843.7" width="211.21" height="17.7" fill="#1f5a6a"/>
<text x="1030.9" y="856.8" font-size="14" text-anchor="middle" textLength="82.5" lengthAdjust="spacingAndGlyphs">Raster Engine</text>
<text x="922.2" y="875.7" font-size="14.5" textLength="26.3" lengthAdjust="spacingAndGlyphs">GPC</text>
</svg>
</body></html>
